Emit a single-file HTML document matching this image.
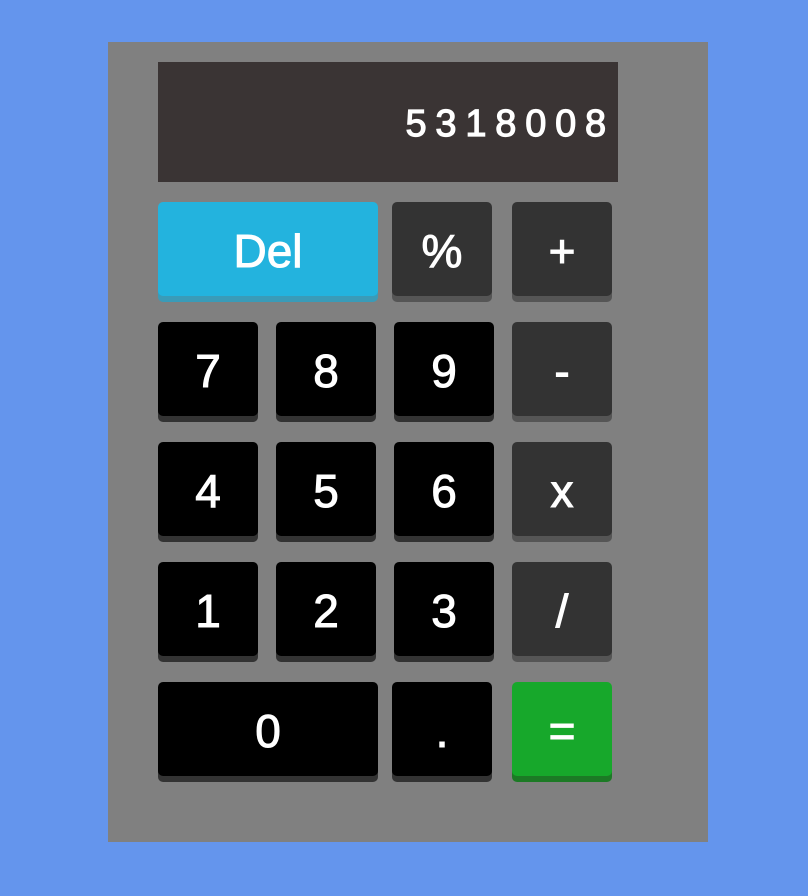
<!DOCTYPE html>
<html><head><style>
body{margin:0;width:808px;height:896px;background:#6495ed;position:relative;font-family:"Liberation Sans",Arial,sans-serif;overflow:hidden}
.calc{position:absolute;left:108px;top:42px;width:600px;height:800px;background:#808080}
.disp{position:absolute;left:158px;top:62px;width:460px;height:120px;background:#3a3434;color:#fff;font-size:38px;letter-spacing:8.8px;text-align:right;line-height:124px;-webkit-text-stroke:1.2px #fff;padding-right:3px;box-sizing:border-box}
.b{position:absolute;width:100px;height:94px;border-radius:5px;color:#fff;font-size:46px;text-align:center;line-height:98px;background:#000;box-shadow:0 6px 0 #333;-webkit-text-stroke:1px #fff}
.op{background:#333;box-shadow:0 6px 0 #555}
.del{background:#23b3de;box-shadow:0 6px 0 #3a9bb8}
.eq{background:#17a82b;box-shadow:0 6px 0 #1c7a25}
</style></head><body>
<div class="calc"></div>
<div class="disp">5318008</div>
<div class="b del" style="left:158px;top:202px;width:220px">Del</div>
<div class="b op" style="left:392px;top:202px">%</div>
<div class="b op" style="left:512px;top:202px">+</div>
<div class="b" style="left:158px;top:322px">7</div>
<div class="b" style="left:276px;top:322px">8</div>
<div class="b" style="left:394px;top:322px">9</div>
<div class="b op" style="left:512px;top:322px">-</div>
<div class="b" style="left:158px;top:442px">4</div>
<div class="b" style="left:276px;top:442px">5</div>
<div class="b" style="left:394px;top:442px">6</div>
<div class="b op" style="left:512px;top:442px">x</div>
<div class="b" style="left:158px;top:562px">1</div>
<div class="b" style="left:276px;top:562px">2</div>
<div class="b" style="left:394px;top:562px">3</div>
<div class="b op" style="left:512px;top:562px">/</div>
<div class="b" style="left:158px;top:682px;width:220px">0</div>
<div class="b" style="left:392px;top:682px">.</div>
<div class="b eq" style="left:512px;top:682px">=</div>
</body></html>
